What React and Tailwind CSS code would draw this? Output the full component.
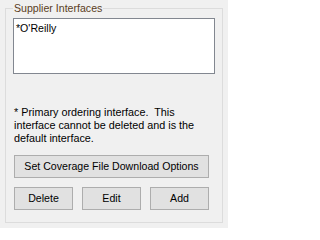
import React from 'react';

const Button = ({ children, className = '' }) => (
    <button
        className={`h-[23px] bg-[#e1e1e1] border border-[#adadad] text-[10.6px] leading-none text-black ${className}`}
    >
        {children}
    </button>
);

const App = () => {
    return (
        <div className="w-[228px] h-[228px] bg-[#f0f0f0] pt-[8px] pl-[5px] font-['Liberation_Sans',Arial,sans-serif]">
            {/* Group box */}
            <div className="relative w-[218px] h-[215px] border border-[#dcdcdc] px-[7px] pt-[9px]">
                <span className="absolute -top-[8px] left-[7px] bg-[#f0f0f0] px-[1px] text-[10.6px] leading-[14px] text-[#5a3d22]">
                    Supplier Interfaces
                </span>

                {/* List box */}
                <div className="w-[202px] h-[56px] bg-white border border-[#828790] px-[2px] pt-[2px] text-[10.6px] leading-[14px] text-black">
                    *O'Reilly
                </div>

                {/* Note */}
                <p className="mt-[32px] pl-[1px] pr-[10px] text-[10.8px] leading-[13px] text-black">
                    * Primary ordering interface.&nbsp; This interface cannot be deleted and is the default interface.
                </p>

                {/* Buttons */}
                <div className="mt-[10px] ml-[1px] w-[195px] flex flex-col gap-[9px]">
                    <Button className="w-full">Set Coverage File Download Options</Button>
                    <div className="flex gap-[9px]">
                        <Button className="w-[59px]">Delete</Button>
                        <Button className="w-[59px]">Edit</Button>
                        <Button className="w-[59px]">Add</Button>
                    </div>
                </div>
            </div>
        </div>
    );
};

export default App;
